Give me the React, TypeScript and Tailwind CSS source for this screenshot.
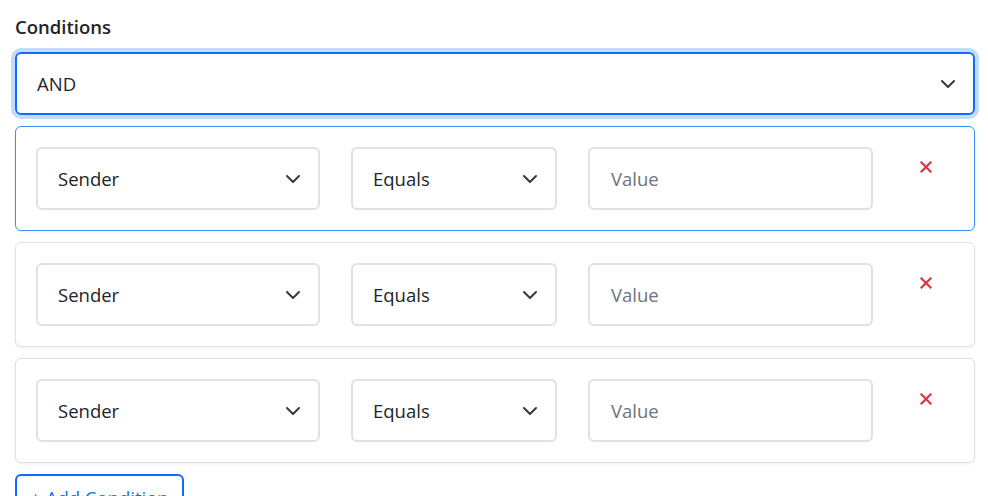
import React from "react";

const Chevron = () => (
  <svg width="16" height="12" viewBox="0 2 16 12" fill="none" className="shrink-0">
    <path d="m2 5 6 6 6-6" stroke="#343a40" strokeWidth="2" strokeLinecap="round" strokeLinejoin="round" />
  </svg>
);

const XIcon = () => (
  <svg width="12" height="12" viewBox="0 0 12 12">
    <path d="M1.5 1.5 10.5 10.5M10.5 1.5 1.5 10.5" stroke="#dc3545" strokeWidth="2.2" strokeLinecap="square" />
  </svg>
);

function Row({ active }: { active?: boolean }) {
  return (
    <div
      className={
        "flex h-[105px] items-start rounded-[6px] border bg-white p-[20px] shadow-[0_1px_3px_rgba(0,0,0,0.06)] " +
        (active ? "border-[#3d8bfd]" : "border-[#dee2e6]")
      }
    >
      <div className="flex h-[63px] w-[284px] items-center justify-between rounded-[6px] border-2 border-[#dee2e6] pl-[20px] pr-[17px] text-[#212529]">
        <span>Sender</span>
        <Chevron />
      </div>
      <div className="ml-[31px] flex h-[63px] w-[206px] items-center justify-between rounded-[6px] border-2 border-[#dee2e6] pl-[20px] pr-[17px] text-[#212529]">
        <span>Equals</span>
        <Chevron />
      </div>
      <div className="ml-[31px] flex h-[63px] w-[285px] items-center rounded-[6px] border-2 border-[#dee2e6] pl-[21px] text-[#6c757d]">
        <span>Value</span>
      </div>
      <div className="ml-[47px] mt-[14px] flex h-[12px] w-[12px] items-center justify-center">
        <XIcon />
      </div>
    </div>
  );
}

export default function App() {
  return (
    <div
      className="h-[496px] w-[988px] overflow-hidden bg-white pl-[15px] text-[18.5px] leading-[1.5]"
      style={{ fontFamily: "'Open Sans', 'Noto Sans', sans-serif" }}
    >
      <div className="w-[960px] pt-[13px]">
        <div className="mb-[11px] h-[28px] font-semibold text-[#212529]">Conditions</div>
        <div className="flex h-[63px] items-center justify-between rounded-[6px] border-2 border-[#0d6efd] pl-[20px] pr-[17px] text-[#212529] shadow-[0_0_0_4px_rgba(13,110,253,0.25)]">
          <span>AND</span>
          <Chevron />
        </div>
        <div className="mt-[11px] flex flex-col gap-[11px]">
          <Row active />
          <Row />
          <Row />
        </div>
        <div className="mt-[11px] flex h-[48px] w-[169px] items-center justify-center gap-[6px] rounded-[6px] border-2 border-[#0d6efd] text-[#0d6efd]">
          <span>+ Add Condition</span>
        </div>
      </div>
    </div>
  );
}
